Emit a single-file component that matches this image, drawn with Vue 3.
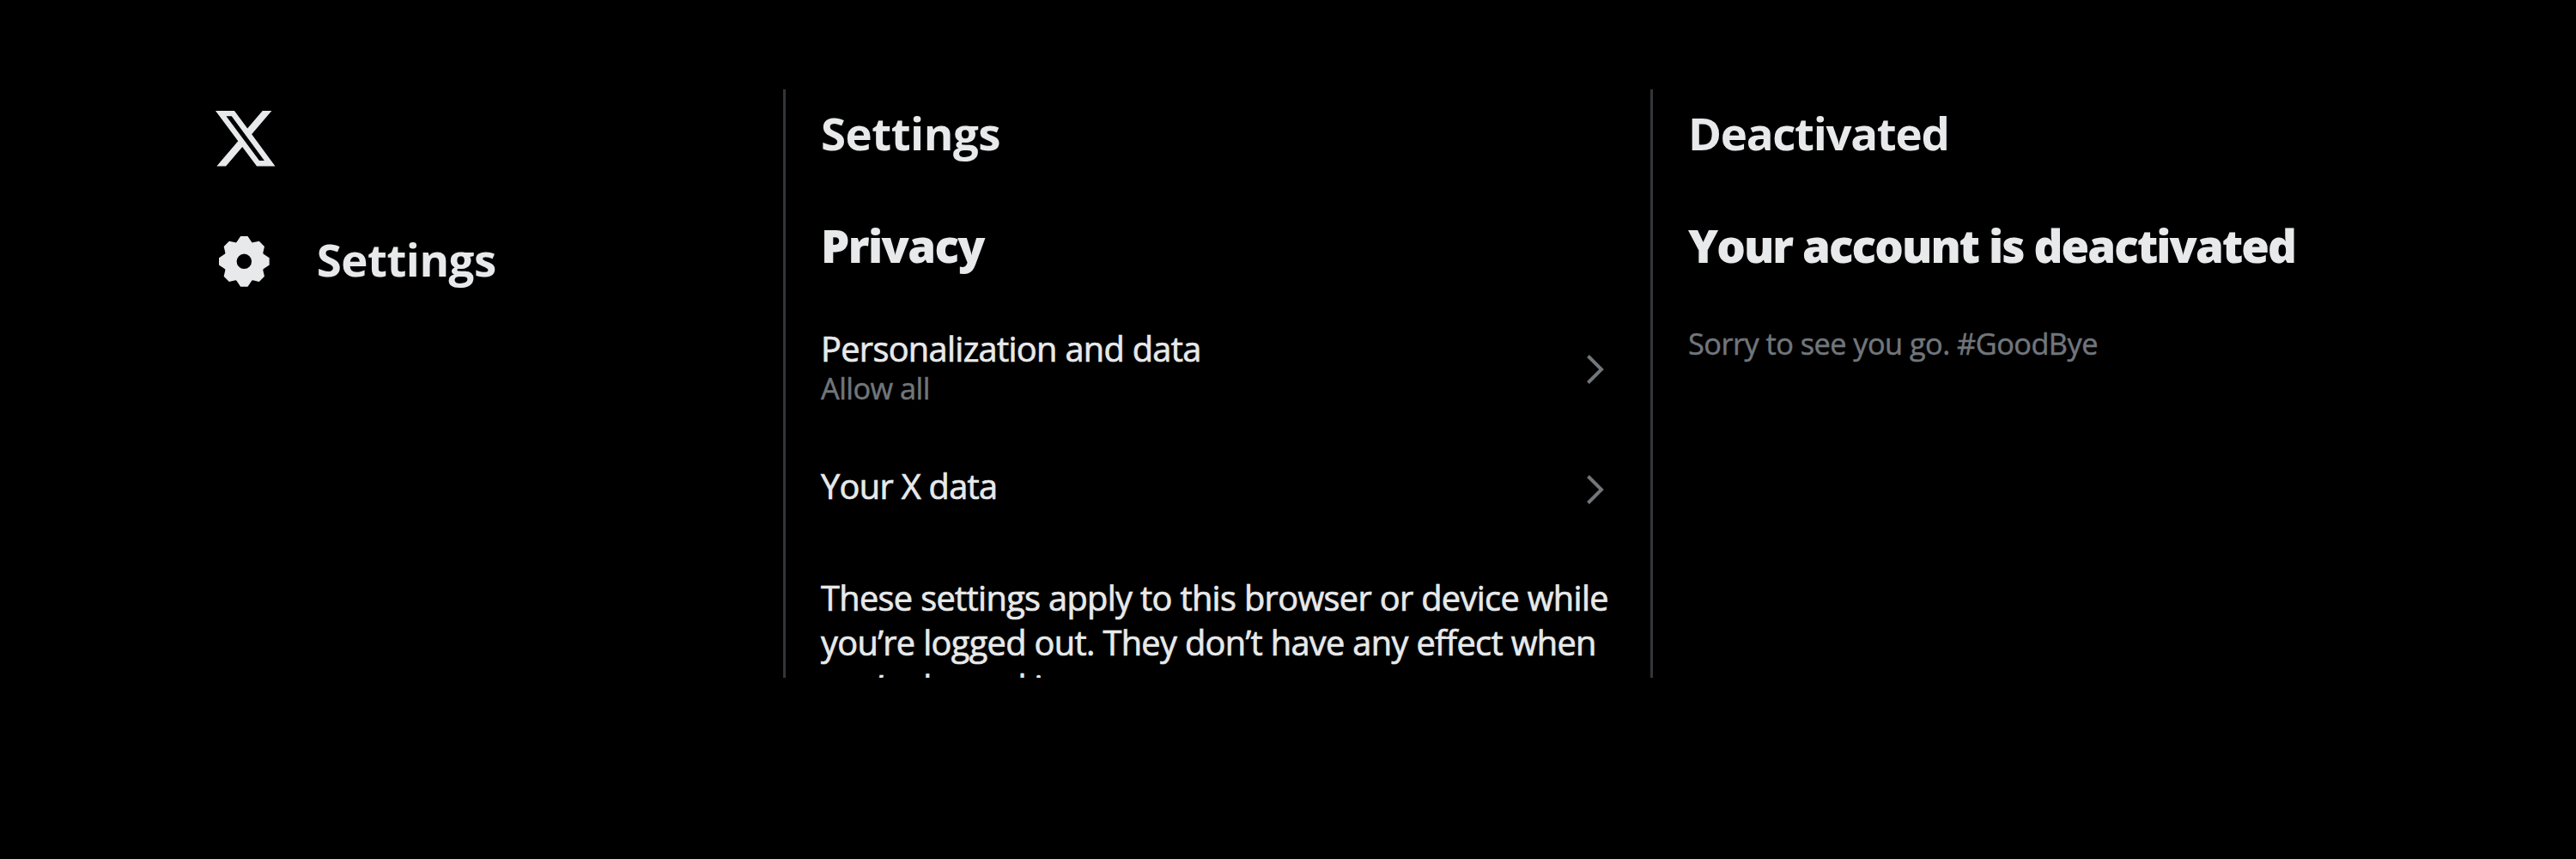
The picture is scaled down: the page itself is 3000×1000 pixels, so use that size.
<script setup>
import {ref} from "vue"

const items = ref([
    {id : 1, title : "Personalization and data", note : "Allow all"},
    {id : 2, title : "Your X data", note : ""},
])
</script>


<template>
    <div class="page">
        <nav class="sidebar">
            <svg class="logo" viewBox="1.254 2.25 21.573 19.5" preserveAspectRatio="none">
                <path d="M18.244 2.25h3.308l-7.227 8.26 8.502 11.24H16.17l-5.214-6.817L4.99 21.75H1.68l7.73-8.835L1.254 2.25H8.08l4.713 6.231zm-1.161 17.52h1.833L7.084 4.126H5.117z" />
            </svg>
            <a class="nav-link">
                <svg class="gear" viewBox="0 0 24 24">
                    <path fill-rule="evenodd" d="M10.54 1.75h2.92l1.57 2.36c.11.17.32.25.53.21l2.53-.59 2.17 2.17-.58 2.54c-.05.2.04.41.21.53l2.36 1.57v2.92l-2.36 1.57c-.17.12-.26.33-.21.53l.58 2.54-2.17 2.17-2.53-.59c-.21-.04-.42.04-.53.21l-1.57 2.36h-2.92l-1.58-2.36c-.11-.17-.32-.25-.52-.21l-2.54.59-2.17-2.17.58-2.54c.05-.2-.03-.41-.21-.53l-2.35-1.57v-2.92L4.1 8.97c.18-.12.26-.33.21-.53L3.73 5.9 5.9 3.73l2.54.59c.2.04.41-.04.52-.21l1.58-2.36zM12 8.95a3.05 3.05 0 1 0 0 6.1 3.05 3.05 0 0 0 0-6.1z" />
                </svg>
                <span class="title">Settings</span>
            </a>
        </nav>

        <main class="panel list">
            <h1 class="title">Settings</h1>
            <h2 class="heading privacy">Privacy</h2>
            <div v-for="item in items" :key="item.id" class="item">
                <div class="item-text">
                    <p class="item-title">{{ item.title }}</p>
                    <p v-if="item.note" class="note">{{ item.note }}</p>
                </div>
                <svg class="chevron" viewBox="0 0 24 24">
                    <path d="M14.586 12L7.543 4.96l1.414-1.42L17.414 12l-8.457 8.46-1.414-1.42L14.586 12z" />
                </svg>
            </div>
            <p class="info">
                These settings apply to this browser or device while<br>
                you’re logged out. They don’t have any effect when<br>
                you’re logged in.
            </p>
        </main>

        <section class="panel detail">
            <h1 class="title">Deactivated</h1>
            <h2 class="heading">Your account is deactivated</h2>
            <p class="note sorry">Sorry to see you go. #GoodBye</p>
        </section>
    </div>
</template>

<style>
html, body {
    margin: 0;
    background: #000;
}
</style>

<style scoped>
.page {
    display: flex;
    box-sizing: border-box;
    height: 1000px;
    padding: 104px 0 211px;
    overflow: hidden;
    background: #000;
    color: #e7e9ea;
    font-family: "Open Sans", "Noto Sans", sans-serif;
}

h1, h2, p {
    margin: 0;
    white-space: nowrap;
}

.sidebar {
    box-sizing: border-box;
    flex: none;
    width: 912px;
    padding: 25px 0 0 250px;
}

.logo {
    display: block;
    width: 69.5px;
    height: 64.5px;
    margin-left: 1.3px;
    fill: #e7e9ea;
}

.nav-link {
    display: flex;
    align-items: center;
    margin-top: 76.5px;
}

.gear {
    width: 68.7px;
    height: 68.7px;
    margin-right: 50px;
    fill: #e7e9ea;
}

.title {
    font-size: 52.8px;
    font-weight: 700;
    line-height: 72px;
    letter-spacing: -0.5px;
}

.nav-link .title {
    margin-top: -4px;
}

.panel {
    box-sizing: border-box;
    height: 685px;
    padding: 15px 0 0 41px;
    border-left: 3px solid #333639;
    overflow: hidden;
}

.list {
    flex: none;
    width: 1010px;
}

.detail {
    flex: 1;
}

.detail .title {
    letter-spacing: -1.3px;
}

.heading {
    margin-top: 59px;
    font-size: 52.8px;
    font-weight: 800;
    line-height: 72px;
    letter-spacing: -1.9px;
}

.privacy {
    margin-bottom: 38px;
    letter-spacing: -1.6px;
}

.item {
    display: flex;
    align-items: center;
    justify-content: space-between;
    height: 140px;
    padding-right: 41px;
}

.item-text {
    padding-bottom: 8px;
}

.item-title,
.info {
    font-size: 39.7px;
    line-height: 52px;
    letter-spacing: -0.66px;
    -webkit-text-stroke: 0.7px currentColor;
}

.note {
    color: #71767b;
    font-size: 34.3px;
    line-height: 40px;
    letter-spacing: -0.52px;
    -webkit-text-stroke: 0.5px currentColor;
}

.chevron {
    width: 48px;
    height: 48px;
    fill: #71767b;
}

.info {
    margin-top: 30px;
    letter-spacing: -0.64px;
}

.sorry {
    margin-top: 58px;
}
</style>
